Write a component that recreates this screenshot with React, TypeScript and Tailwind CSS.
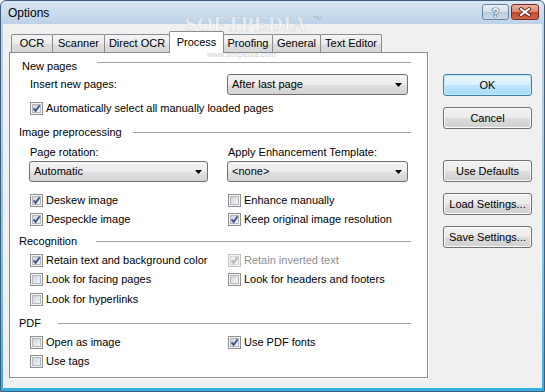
import React from "react";

const FONT = "font-['Liberation_Sans',Arial,sans-serif]";

function CheckBox({ checked, disabled }: { checked?: boolean; disabled?: boolean }) {
  return (
    <svg width="13" height="13" viewBox="0 0 13 13" className="shrink-0">
      <defs>
        <linearGradient id="cbfill" x1="0" y1="0" x2="1" y2="1">
          <stop offset="0" stopColor="#cdd1d8" />
          <stop offset="1" stopColor="#f6f6f6" />
        </linearGradient>
      </defs>
      <rect x="0.5" y="0.5" width="12" height="12" fill="#f4f4f4" stroke={disabled ? "#c2c2c2" : "#8e8f8f"} />
      <rect x="2.5" y="2.5" width="8" height="8" fill={disabled ? "#f0f0f0" : "url(#cbfill)"} stroke={disabled ? "#d6d6d6" : "#b3b7bd"} />
      {checked && (
        <path
          d="M3.6 6.4 L5.6 8.9 L9.6 3.4"
          fill="none"
          stroke={disabled ? "#b4b4b4" : "#40558d"}
          strokeWidth="1.8"
          strokeLinejoin="miter"
        />
      )}
    </svg>
  );
}

function CheckRow({ label, checked, disabled }: { label: string; checked?: boolean; disabled?: boolean }) {
  return (
    <div className="flex items-center gap-[3px]">
      <CheckBox checked={checked} disabled={disabled} />
      <span className={disabled ? "text-[#8d8d8d]" : ""}>{label}</span>
    </div>
  );
}

function Combo({ value, w }: { value: string; w: string }) {
  return (
    <div className={`${w} h-[21px] shrink-0 flex items-center justify-between pl-[4px] pr-[5px] rounded-[3px] border border-[#707070] bg-[linear-gradient(to_bottom,#f3f3f3_0%,#ececec_50%,#e0e0e0_51%,#d3d3d3_100%)]`}>
      <span>{value}</span>
      <svg width="7" height="4" viewBox="0 0 7 4">
        <polygon points="0,0 7,0 3.5,4" fill="#000" />
      </svg>
    </div>
  );
}

function Header({ title, labelW, pad, top, high }: { title: string; labelW: string; pad: string; top: string; high?: boolean }) {
  return (
    <div className={`flex h-[16px] pr-[16px] ${pad} ${top} ${high ? "items-start" : "items-center"}`}>
      <span className={`${labelW} shrink-0 leading-[16px]`}>{title}</span>
      <div className={`flex-1 h-px bg-[#a0a0a0] ${high ? "mt-[4px]" : ""}`} />
    </div>
  );
}

function Tab({ label, w, active }: { label: string; w: string; active?: boolean }) {
  if (active) {
    return (
      <div className={`${w} h-[22px] -ml-px mb-[-1px] relative z-10 flex items-center justify-center border border-b-0 border-[#898c95] bg-white rounded-t-[2px]`}>
        {label}
      </div>
    );
  }
  return (
    <div className={`${w} h-[18px] -ml-px flex items-center justify-center border border-b-0 border-[#898c95] rounded-t-[2px] bg-[linear-gradient(to_bottom,#f4f4f4_0%,#ebebeb_50%,#dedede_51%,#d6d6d6_100%)]`}>
      {label}
    </div>
  );
}

function Btn({ label, top, primary }: { label: string; top: string; primary?: boolean }) {
  const skin = primary
    ? "border-[#3c7fb1] bg-[linear-gradient(to_bottom,#eaf6fd_0%,#d9f0fc_50%,#bee6fd_51%,#a7d9f5_100%)] shadow-[inset_0_0_0_1px_#c7e9fb]"
    : "border-[#707070] bg-[linear-gradient(to_bottom,#f2f2f2_0%,#ebebeb_50%,#dddddd_51%,#cfcfcf_100%)] shadow-[inset_0_0_0_1px_#fbfbfb]";
  return (
    <div className={`w-[89px] h-[22px] ${top} flex items-center justify-center rounded-[3px] border ${skin}`}>
      {label}
    </div>
  );
}

export default function App() {
  return (
    <div className={`${FONT} relative w-[545px] h-[392px] overflow-hidden rounded-t-[6px] border border-[#3f5d7d] text-[11px] text-black flex flex-col bg-[linear-gradient(to_bottom,#d8e6f4_0px,#bdd2e9_23px,#a9cde8_120px,#6cc0ea_300px,#35ade2_100%)]`}>
      {/* title bar */}
      <div className="h-[23px] shrink-0 flex items-center justify-between pl-[7px] pr-[5px]">
        <span className="text-[12px]">Options</span>
        <div className="self-start mt-[3px] flex gap-[2px]">
          <div className="w-[27px] h-[16px] rounded-[3px] border border-[#6b829f] flex items-center justify-center bg-[linear-gradient(to_bottom,#e9f0f7_0%,#d3dfec_50%,#b9cbde_51%,#c9d9ea_100%)]">
            <span className="text-[13px] font-bold leading-none text-white [text-shadow:0_0_1px_#23364f,0_0_1px_#23364f,0_0_1px_#23364f]">?</span>
          </div>
          <div className="w-[28px] h-[16px] rounded-[3px] border border-[#7a2a1c] flex items-center justify-center bg-[linear-gradient(to_bottom,#eab2a3_0%,#d98670_50%,#c2452c_51%,#d3664b_100%)]">
            <svg width="14" height="10" viewBox="0 0 14 10">
              <path d="M3 2 L11 8 M11 2 L3 8" stroke="#5a1a10" strokeWidth="3.6" strokeLinecap="square" />
              <path d="M3 2 L11 8 M11 2 L3 8" stroke="#ffffff" strokeWidth="2" strokeLinecap="square" />
            </svg>
          </div>
        </div>
      </div>

      {/* client area */}
      <div className="mx-[2px] h-[364px] shrink-0 bg-[#f0f0f0] flex pt-[7px] pl-[6px]">
        <div className="flex flex-col w-[419px]">
          <div className="flex items-end h-[21px] pl-[3px]">
            <Tab label="OCR" w="w-[42px]" />
            <Tab label="Scanner" w="w-[53px]" />
            <Tab label="Direct OCR" w="w-[66px]" />
            <Tab label="Process" w="w-[55px]" active />
            <Tab label="Proofing" w="w-[50px]" />
            <Tab label="General" w="w-[49px]" />
            <Tab label="Text Editor" w="w-[62px]" />
          </div>
          <div className="w-[419px] h-[326px] border border-[#898c95] bg-white shadow-[1px_1px_0_#ffffff] flex flex-col">
            <Header title="New pages" pad="pl-[12px]" labelW="w-[75px]" top="mt-[5px]" high />
            <div className="flex items-center h-[21px] pl-[20px]">
              <span className="w-[197px] shrink-0">Insert new pages:</span>
              <Combo value="After last page" w="w-[181px]" />
            </div>
            <div className="flex items-center h-[16px] pl-[20px] mt-[5px]">
              <CheckRow checked label="Automatically select all manually loaded pages" />
            </div>

            <Header title="Image preprocessing" pad="pl-[9px]" labelW="w-[114px]" top="mt-[8px]" />
            <div className="flex items-center h-[16px] pl-[20px] mt-[4px]">
              <span className="w-[198px] shrink-0">Page rotation:</span>
              <span>Apply Enhancement Template:</span>
            </div>
            <div className="flex items-center h-[21px] pl-[19px] mt-[1px]">
              <Combo value="Automatic" w="w-[179px]" />
              <div className="ml-[19px]">
                <Combo value="<none>" w="w-[181px]" />
              </div>
            </div>
            <div className="flex items-center h-[16px] pl-[20px] mt-[10px]">
              <div className="w-[198px] shrink-0"><CheckRow checked label="Deskew image" /></div>
              <CheckRow label="Enhance manually" />
            </div>
            <div className="flex items-center h-[16px] pl-[20px] mt-[3px]">
              <div className="w-[198px] shrink-0"><CheckRow checked label="Despeckle image" /></div>
              <CheckRow checked label="Keep original image resolution" />
            </div>

            <Header title="Recognition" pad="pl-[9px]" labelW="w-[77px]" top="mt-[6px]" />
            <div className="flex items-center h-[16px] pl-[20px] mt-[3px]">
              <div className="w-[198px] shrink-0"><CheckRow checked label="Retain text and background color" /></div>
              <CheckRow checked disabled label="Retain inverted text" />
            </div>
            <div className="flex items-center h-[16px] pl-[20px] mt-[3px]">
              <div className="w-[198px] shrink-0"><CheckRow label="Look for facing pages" /></div>
              <CheckRow label="Look for headers and footers" />
            </div>
            <div className="flex items-center h-[16px] pl-[20px] mt-[4px]">
              <CheckRow label="Look for hyperlinks" />
            </div>

            <Header title="PDF" pad="pl-[9px]" labelW="w-[39px]" top="mt-[8px]" />
            <div className="flex items-center h-[16px] pl-[20px] mt-[3px]">
              <div className="w-[198px] shrink-0"><CheckRow label="Open as image" /></div>
              <CheckRow checked label="Use PDF fonts" />
            </div>
            <div className="flex items-center h-[16px] pl-[20px] mt-[3px]">
              <CheckRow label="Use tags" />
            </div>
          </div>
        </div>

        <div className="flex flex-col ml-[15px] mt-[43px]">
          <Btn label="OK" top="" primary />
          <Btn label="Cancel" top="mt-[11px]" />
          <Btn label="Use Defaults" top="mt-[31px]" />
          <Btn label="Load Settings..." top="mt-[11px]" />
          <Btn label="Save Settings..." top="mt-[11px]" />
        </div>
      </div>

      {/* watermark */}
      <div className="absolute left-[184px] top-[13px] pointer-events-none">
        <div className="font-['Liberation_Serif',serif] font-bold text-[21px] leading-[20px] tracking-[0.2px] text-white/55 [-webkit-text-stroke:0.6px_rgba(140,140,140,0.3)]">SOFTPEDIA</div>
      </div>
      <div className="absolute left-[312px] top-[14px] text-[6px] leading-[6px] text-[#9a9a9a]/60 pointer-events-none">TM</div>
      <div className="absolute left-[206px] top-[50px] text-[8px] leading-[8px] text-[#b8b8b8]/70 pointer-events-none">www.softpedia.com</div>
    </div>
  );
}
